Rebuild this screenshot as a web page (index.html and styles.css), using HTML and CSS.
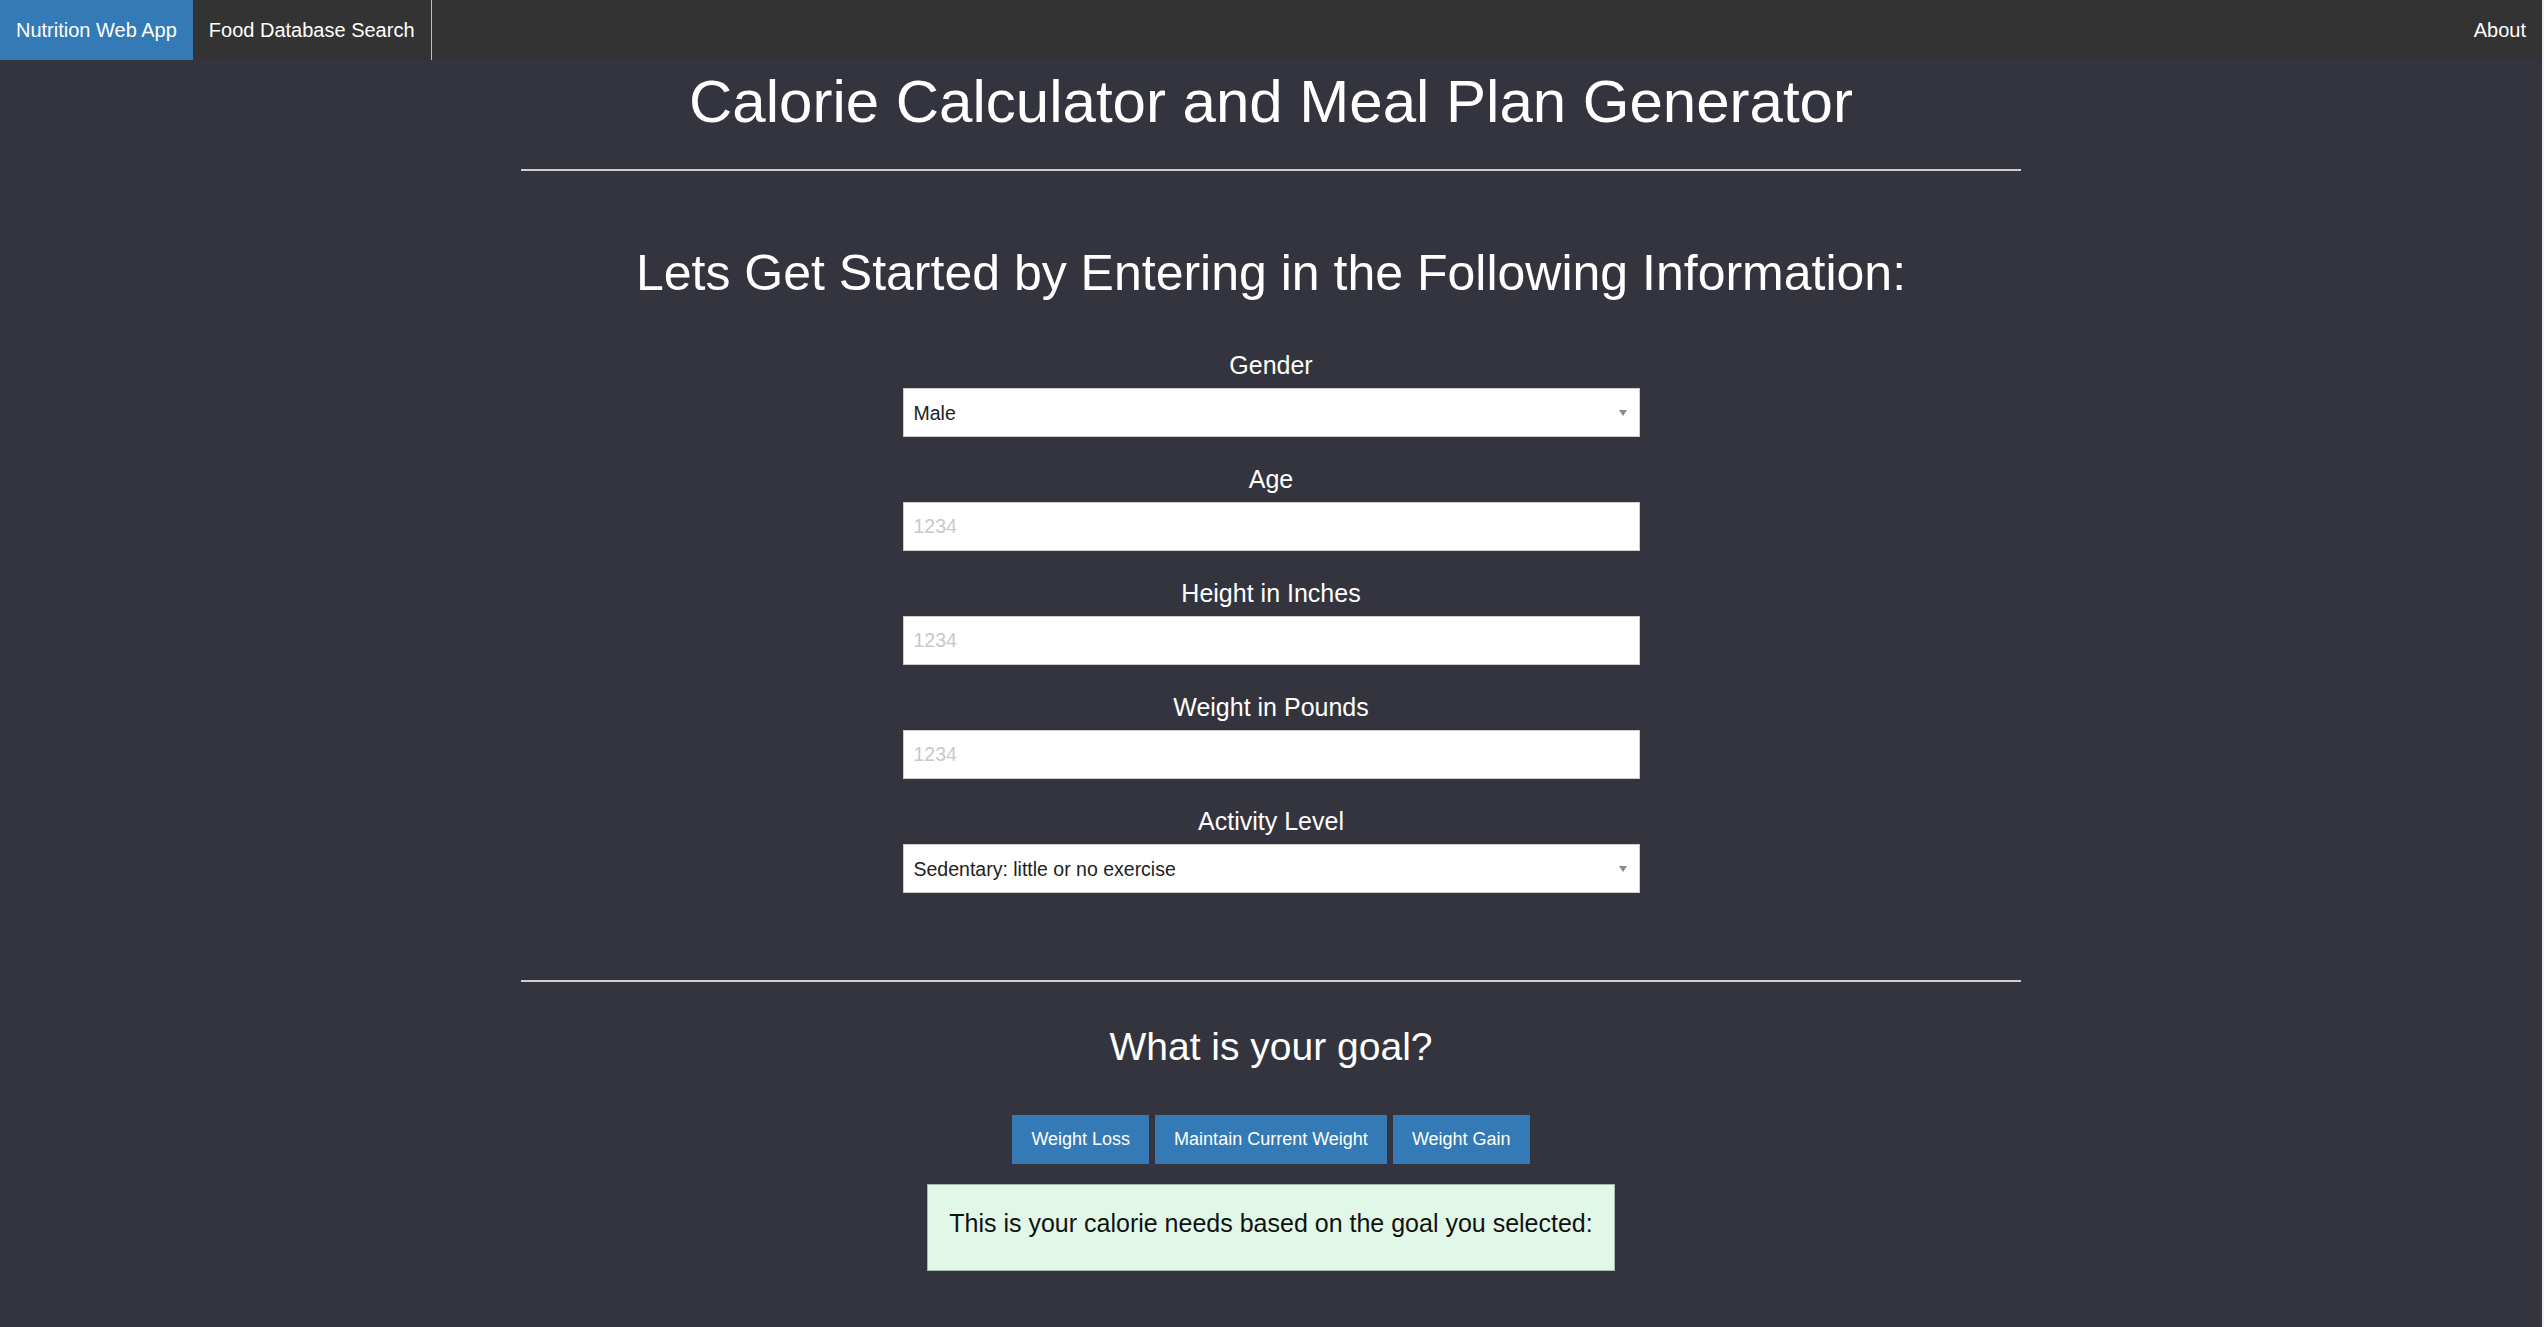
FILE: index.html
```html
<!DOCTYPE html>
<html lang="en">
<head>
<meta charset="utf-8">
<title>Nutrition Web App</title>
<link rel="stylesheet" href="styles.css">
</head>
<body>
<nav class="navbar">
  <a class="brand" href="#">Nutrition Web App</a>
  <a class="nav-link nav-sep" href="#">Food Database Search</a>
  <span class="nav-spacer"></span>
  <a class="nav-link" href="#">About</a>
</nav>
<main class="container">
  <h1 class="title">Calorie Calculator and Meal Plan Generator</h1>
  <hr class="divider">
  <h2 class="subtitle">Lets Get Started by Entering in the Following Information:</h2>
  <form class="form">
    <div class="group">
      <label class="label">Gender</label>
      <div class="select-wrap">
        <select class="control">
          <option>Male</option>
          <option>Female</option>
        </select>
      </div>
    </div>
    <div class="group">
      <label class="label">Age</label>
      <input class="control" type="number" placeholder="1234">
    </div>
    <div class="group">
      <label class="label">Height in Inches</label>
      <input class="control" type="number" placeholder="1234">
    </div>
    <div class="group">
      <label class="label">Weight in Pounds</label>
      <input class="control" type="number" placeholder="1234">
    </div>
    <div class="group">
      <label class="label">Activity Level</label>
      <div class="select-wrap">
        <select class="control">
          <option>Sedentary: little or no exercise</option>
        </select>
      </div>
    </div>
  </form>
  <hr class="divider divider-lower">
  <h3 class="goal-title">What is your goal?</h3>
  <div class="goal-buttons">
    <button class="btn" type="button">Weight Loss</button>
    <button class="btn" type="button">Maintain Current Weight</button>
    <button class="btn" type="button">Weight Gain</button>
  </div>
  <div class="result-row">
    <div class="result">This is your calorie needs based on the goal you selected:</div>
  </div>
</main>
</body>
</html>
```
FILE: styles.css
```css
html {
  margin: 0;
  padding: 0;
  background: #f0f0f0;
}
body {
  margin: 0 2px 0 0;
  padding: 0;
  background: #33343d;
  color: #ffffff;
  font-family: "Liberation Sans", Arial, sans-serif;
  min-height: 1327px;
}
.navbar {
  display: flex;
  height: 60px;
  background: #333333;
}
.brand, .nav-link {
  display: flex;
  align-items: center;
  padding: 0 16px;
  font-size: 20px;
  color: #ffffff;
  text-decoration: none;
}
.brand {
  background: #337ab7;
}
.nav-sep {
  border-right: 1px solid #bdbdbd;
}
.nav-spacer {
  flex: 1;
}
.container {
  width: 1500px;
  margin: 0 auto;
}
.title {
  margin: 9px 0 0;
  font-size: 60px;
  line-height: 66px;
  font-weight: normal;
  text-align: center;
}
.divider {
  margin: 34px 0 0;
  height: 0;
  border: 0;
  border-top: 2px solid #cfcfcf;
}
.subtitle {
  margin: 75px 0 0;
  font-size: 50px;
  line-height: 55px;
  font-weight: normal;
  text-align: center;
}
.form {
  width: 737px;
  margin: 49px auto 0;
}
.group {
  margin-bottom: 27px;
}
.group:last-child {
  margin-bottom: 0;
}
.label {
  display: block;
  text-align: center;
  font-size: 25px;
  line-height: 30px;
  margin-bottom: 8px;
}
.control {
  display: block;
  width: 100%;
  height: 49px;
  box-sizing: border-box;
  margin: 0;
  padding: 0 10px;
  border: 1px solid #cccccc;
  border-radius: 0;
  background: #ffffff;
  color: #222222;
  font-family: "Liberation Sans", Arial, sans-serif;
  font-size: 19.5px;
  outline: none;
  -webkit-appearance: none;
  appearance: none;
  -moz-appearance: textfield;
}
.control::placeholder {
  color: #c8c8c8;
}
.control::-webkit-outer-spin-button,
.control::-webkit-inner-spin-button {
  -webkit-appearance: none;
  margin: 0;
}
.select-wrap {
  position: relative;
}
.select-wrap::after {
  content: "";
  position: absolute;
  right: 13px;
  top: 22px;
  border-left: 4px solid transparent;
  border-right: 4px solid transparent;
  border-top: 6px solid #8a8a8a;
  pointer-events: none;
}
.divider-lower {
  margin-top: 87px;
}
.goal-title {
  margin: 43px 0 0;
  font-size: 39px;
  line-height: 43px;
  font-weight: normal;
  text-align: center;
}
.goal-buttons {
  display: flex;
  justify-content: center;
  gap: 6px;
  margin-top: 47px;
}
.btn {
  height: 49px;
  padding: 0 19px;
  border: 0;
  border-radius: 0;
  background: #337ab7;
  color: #ffffff;
  font-family: "Liberation Sans", Arial, sans-serif;
  font-size: 18px;
}
.result-row {
  display: flex;
  justify-content: center;
  margin-top: 20px;
}
.result {
  padding: 24px 21px 32px;
  background: #e1f8e8;
  border: 1px solid #a9b8ae;
  color: #111111;
  font-size: 25px;
  line-height: 29px;
}
```
